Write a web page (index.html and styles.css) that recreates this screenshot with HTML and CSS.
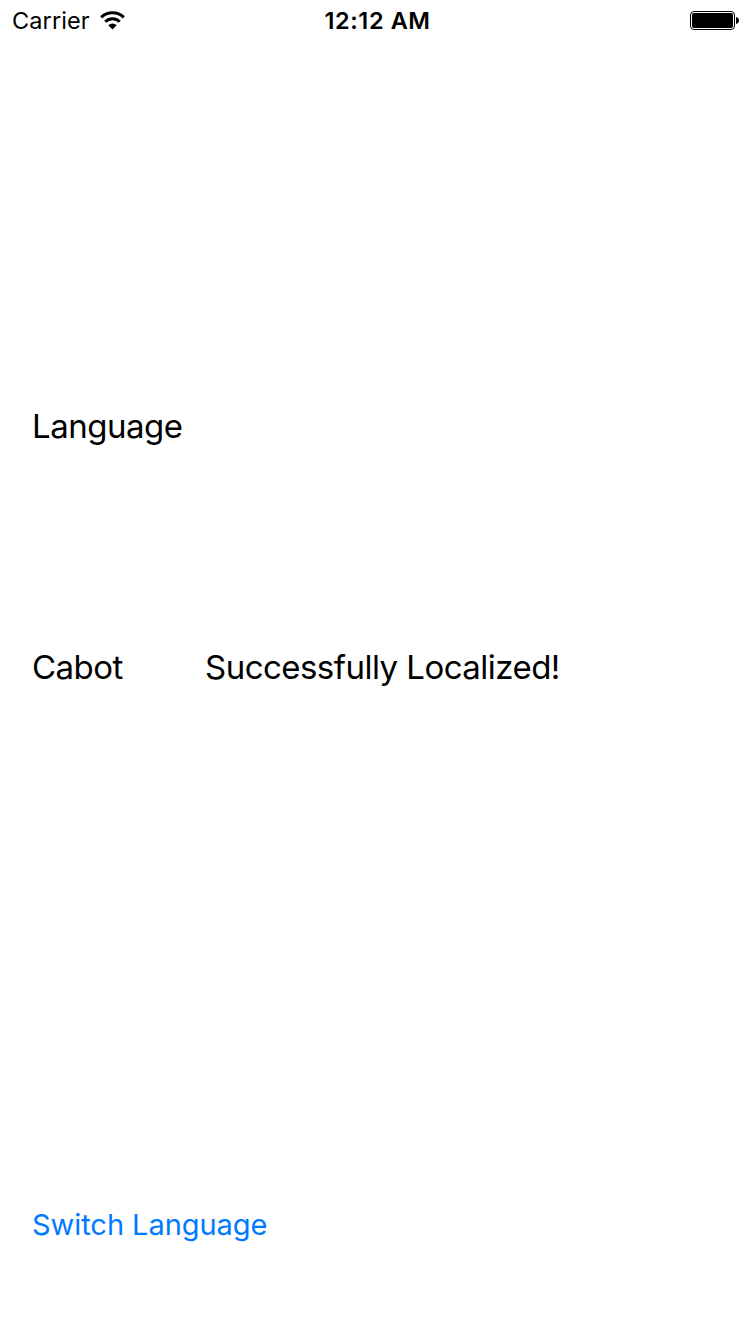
FILE: index.html
```html
<!DOCTYPE html>
<html lang="en">
<head>
<meta charset="utf-8">
<title>Language</title>
<link rel="stylesheet" href="styles.css">
</head>
<body>
<div class="screen">
  <header class="status-bar">
    <div class="network">
      <span class="carrier">Carrier</span>
      <svg class="wifi" viewBox="0 0 25 19" width="25" height="19" aria-hidden="true">
        <path d="M1.200 6.300a16.200 16.200 0 0 1 22.600 0" fill="none" stroke="#000" stroke-width="3.100"/>
        <path d="M5.300 10.700a10.300 10.300 0 0 1 14.400 0" fill="none" stroke="#000" stroke-width="3"/>
        <path d="M8.300 14.200a6 6 0 0 1 8.400 0L12.500 18.400z"/>
      </svg>
    </div>
    <time class="clock">12:12 AM</time>
    <svg class="battery" viewBox="0 0 49 19" width="49" height="19" aria-hidden="true">
      <rect x=".5" y=".5" width="44" height="18" rx="3.500" fill="none" stroke="#000"/>
      <rect x="2" y="2" width="41" height="15" rx="2"/>
      <path d="M46 6c4 .5 4 6.500 0 7z"/>
    </svg>
  </header>
  <main class="content">
    <h1 class="heading">Language</h1>
    <div class="row">
      <span class="name">Cabot</span>
      <span class="message">Successfully Localized!</span>
    </div>
    <button class="switch" type="button">Switch Language</button>
  </main>
</div>
</body>
</html>
```
FILE: styles.css
```css
body {
  margin: 0;
  background: #fff;
  color: #000;
  font-family: Inter, "Liberation Sans", sans-serif;
}

.screen {
  height: 1334px;
  display: flex;
  flex-direction: column;
  overflow: hidden;
}

.status-bar {
  height: 41px;
  box-sizing: border-box;
  padding: 0 11px 0 12px;
  display: grid;
  grid-template-columns: 312.5px auto 1fr;
  align-items: center;
  line-height: 41px;
  white-space: nowrap;
}

.network {
  display: flex;
  align-items: center;
}

.wifi {
  margin-bottom: 1px;
}

.carrier {
  width: 88px;
  font-size: 23.5px;
  letter-spacing: 0.1px;
}

.clock {
  font-size: 23.5px;
  font-weight: 600;
  letter-spacing: 0.6px;
}

.battery {
  justify-self: end;
}

.content {
  padding: 364px 32px 0;
}

.heading {
  margin: 0;
  font-size: 33px;
  font-weight: 400;
  line-height: 42px;
  letter-spacing: -0.5px;
}

.row {
  margin-top: 199px;
  display: grid;
  grid-template-columns: 173px auto;
  font-size: 33px;
  line-height: 42px;
  letter-spacing: -0.53px;
}

.switch {
  display: block;
  margin-top: 519px;
  padding: 0;
  border: 0;
  background: none;
  color: #007aff;
  font: inherit;
  font-size: 29px;
  line-height: 36px;
  letter-spacing: -0.05px;
}
```
